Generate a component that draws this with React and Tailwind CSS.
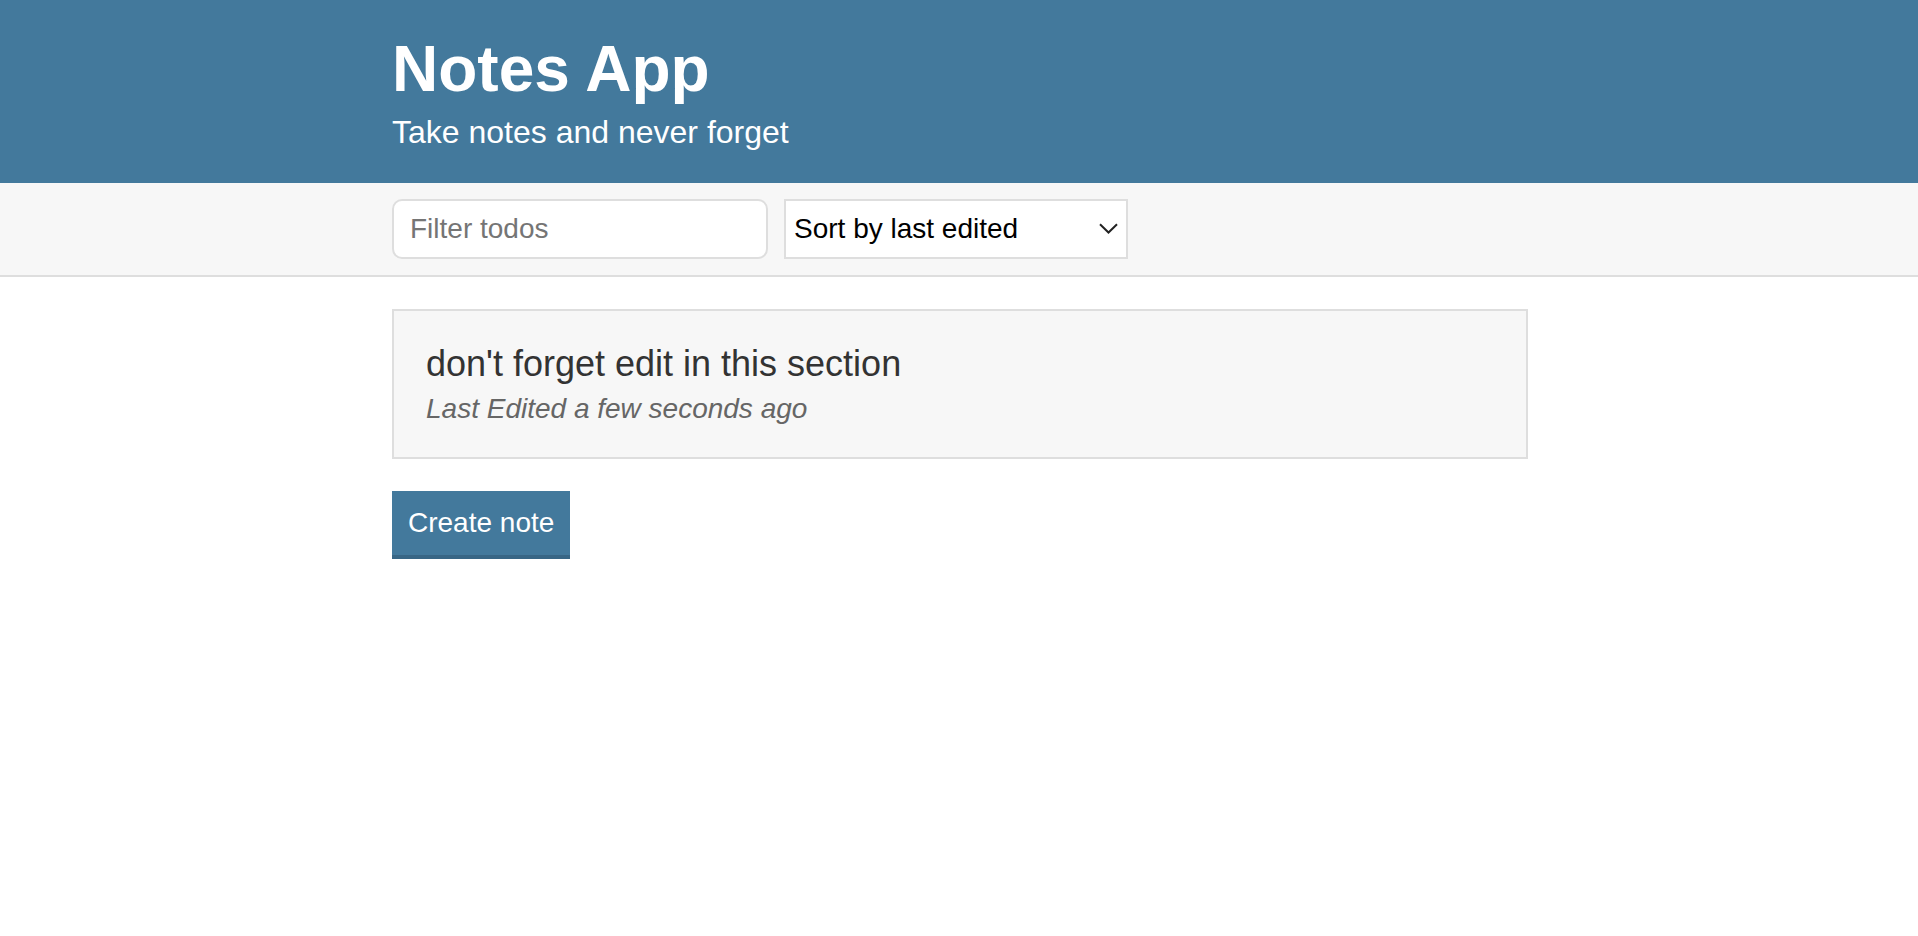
import { useState } from "react";

const notes = [
  { id: 1, title: "don't forget edit in this section", edited: "a few seconds ago" },
];

export default function App() {
  const [filter, setFilter] = useState("");
  const [sort, setSort] = useState("byEdited");

  return (
    <div className="min-h-screen bg-white font-['Liberation_Sans',Arial,sans-serif] text-[#333]">
      {/* Header */}
      <header className="bg-[#43799c] py-[32px] text-white">
        <div className="mx-auto max-w-[1200px] pl-[33px] pr-[31px]">
          <h1 className="mb-[8px] text-[64px] font-bold leading-[normal]">Notes App</h1>
          <h2 className="text-[32px] font-light leading-[normal]">Take notes and never forget</h2>
        </div>
      </header>

      {/* Actions */}
      <div className="border-b-2 border-[#dedede] bg-[#f7f7f7] py-[16px]">
        <div className="mx-auto flex max-w-[1200px] pl-[33px] pr-[31px]">
          <input
            value={filter}
            onChange={(e) => setFilter(e.target.value)}
            placeholder="Filter todos"
            className="mr-[16px] h-[60px] w-[376px] rounded-[10px] border-2 border-[#dedede] bg-white px-[16px] py-[8px] text-[28px] font-light outline-none placeholder:text-[#757575]"
          />
          <div className="relative">
            <select
              value={sort}
              onChange={(e) => setSort(e.target.value)}
              className="h-[60px] w-[344px] appearance-none rounded-none border-2 border-[#dedede] bg-white pl-[8px] pr-[40px] text-[28px] font-light text-black outline-none"
            >
              <option value="byEdited">Sort by last edited</option>
              <option value="byCreated">Sort by recently created</option>
              <option value="alphabetical">Sort alphabetically</option>
            </select>
            <svg
              className="pointer-events-none absolute right-[10px] top-[24px]"
              width="19"
              height="11"
              viewBox="0 0 19 11"
              fill="none"
            >
              <path d="M1 1.2 L9.5 9.5 L18 1.2" stroke="#222" strokeWidth="2" />
            </svg>
          </div>
        </div>
      </div>

      {/* Notes */}
      <div className="mx-auto max-w-[1200px] pl-[33px] pr-[31px]">
        <div className="py-[32px]">
          {notes.map((note) => (
            <a
              key={note.id}
              href="#"
              className="block border-2 border-[#dedede] bg-[#f7f7f7] p-[32px] text-[#333] no-underline"
            >
              <p className="mb-[8px] text-[36px] leading-[normal]">{note.title}</p>
              <p className="text-[28px] font-light italic leading-[normal] text-[#666]">
                Last Edited {note.edited}
              </p>
            </a>
          ))}
        </div>
        <button className="border-b-4 border-[#386685] bg-[#43799c] p-[16px] text-[28px] font-light leading-[normal] text-white">
          Create note
        </button>
      </div>
    </div>
  );
}
